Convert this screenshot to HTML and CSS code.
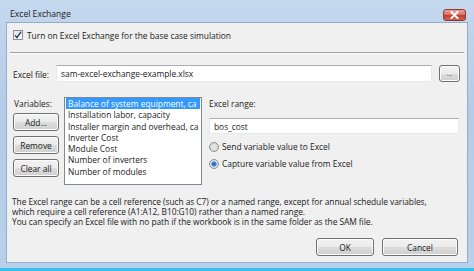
FILE: index.html
```html
<!DOCTYPE html>
<html>
<head>
<meta charset="utf-8">
<link rel="stylesheet" href="styles.css">
</head>
<body>
<div class="window">
  <div class="titlebar">
    <span class="title">Excel Exchange</span>
    <span class="close"><svg width="9" height="8" viewBox="0 0 9 8"><path d="M1.5 1 L7.5 7 M7.5 1 L1.5 7" stroke="#fff" stroke-width="2" stroke-linecap="square"/></svg></span>
  </div>
  <div class="client">
    <div class="check-row">
      <span class="checkbox"><svg width="8" height="8" viewBox="0 0 8 8"><path d="M1 4.2 L3 6.5 L7 0.8" fill="none" stroke="#2a3f74" stroke-width="1.4"/></svg></span>
      <span>Turn on Excel Exchange for the base case simulation</span>
    </div>
    <div class="sep"></div>
    <div class="file-row">
      <span class="file-label">Excel file:</span>
      <div class="textbox file-input">sam-excel-exchange-example.xlsx</div>
      <button class="btn browse">...</button>
    </div>
    <div class="vars">
      <div class="vars-left">
        <span class="vars-label">Variables:</span>
        <div class="side-btns">
          <button class="btn side-btn">Add...</button>
          <button class="btn side-btn">Remove</button>
          <button class="btn side-btn">Clear all</button>
        </div>
      </div>
      <div class="listbox">
        <div class="item selected">Balance of system equipment, ca</div>
        <div class="item">Installation labor, capacity</div>
        <div class="item">Installer margin and overhead, ca</div>
        <div class="item">Inverter Cost</div>
        <div class="item">Module Cost</div>
        <div class="item">Number of inverters</div>
        <div class="item">Number of modules</div>
      </div>
      <div class="range">
        <span class="range-label">Excel range:</span>
        <div class="textbox range-input">bos_cost</div>
        <div class="radio-row first"><span class="radio"></span><span>Send variable value to Excel</span></div>
        <div class="radio-row second"><span class="radio on"></span><span>Capture variable value from Excel</span></div>
      </div>
    </div>
    <div class="help">
      <div>The Excel range can be a cell reference (such as C7) or a named range, except for annual schedule variables,</div>
      <div>which require a cell reference (A1:A12, B10:G10) rather than a named range.</div>
      <div>You can specify an Excel file with no path if the workbook is in the same folder as the SAM file.</div>
    </div>
    <div class="footer">
      <button class="btn ok">OK</button>
      <button class="btn cancel">Cancel</button>
    </div>
  </div>
  <div class="frame-bottom"></div>
  <div class="desk-strip"></div>
</div>
</body>
</html>
```

FILE: styles.css
```css
* { box-sizing: border-box; }
body {
  margin: 0;
  font-family: "Open Sans", "Noto Sans", sans-serif;
  font-size: 8.4px;
  color: #1a1a1a;
  background: #ffffff;
}
.window {
  width: 474px;
  height: 271px;
  display: flex;
  flex-direction: column;
  background: linear-gradient(#c4d8ee, #b4cce7 40%, #b9d0ea);
  overflow: hidden;
}
.titlebar {
  height: 22px;
  display: flex;
  justify-content: space-between;
  align-items: flex-start;
  padding: 8px 8px 0 10px;
  flex: none;
}
.title {
  line-height: 12px;
  font-size: 8.6px;
  color: #1b1b1b;
}
.close {
  width: 23px;
  height: 12px;
  margin-top: 1px;
  border: 1px solid #8a3b33;
  border-radius: 3px;
  background: linear-gradient(#e8a497, #d5705f 50%, #c23c2a 52%, #d4614c);
  display: flex;
  align-items: center;
  justify-content: center;
}
.client {
  margin: 0 6px 0 6px;
  height: 241px;
  flex: none;
  border: 1px solid #93aecb;
  background: #f0f0f0;
  display: flex;
  flex-direction: column;
}
.frame-bottom { height: 5px; flex: none; }
.desk-strip {
  height: 3px;
  flex: none;
  background: #35c3ea;
}
.check-row {
  margin-top: 6px;
  padding-left: 6px;
  height: 12px;
  display: flex;
  align-items: center;
  gap: 4px;
}
.checkbox {
  width: 10px;
  height: 10px;
  border: 1px solid #8f8f8f;
  background: linear-gradient(#e6e6e6, #ffffff);
  display: flex;
  align-items: center;
  justify-content: center;
}
.sep {
  margin: 11px 3px 0 3px;
  height: 2px;
  border-top: 1px solid #a0a0a0;
  border-bottom: 1px solid #ffffff;
}
.file-row {
  margin-top: 11px;
  padding-left: 6px;
  padding-right: 7px;
  display: flex;
  align-items: center;
  height: 17px;
}
.file-label {
  width: 43px;
  flex: none;
  margin-top: 2px;
}
.textbox {
  background: #ffffff;
  border: 1px solid #e3e9ef;
  border-top-color: #abadb3;
  display: flex;
  align-items: center;
  padding-left: 4px;
}
.file-input {
  width: 376px;
  height: 17px;
}
.btn {
  font-family: inherit;
  font-size: inherit;
  color: #1a1a1a;
  border: 1px solid #707070;
  border-radius: 3px;
  background: linear-gradient(#f2f2f2, #ebebeb 50%, #dddddd 51%, #cfcfcf);
  box-shadow: inset 0 0 0 1px #fcfcfc;
  padding: 0;
  display: flex;
  align-items: center;
  justify-content: center;
}
.browse {
  margin-left: 7px;
  width: 21px;
  height: 17px;
  font-size: 7px;
  color: #444;
}
.vars {
  margin-top: 15px;
  padding-left: 6px;
  display: flex;
  height: 88px;
}
.vars-left {
  width: 46px;
  display: flex;
  flex-direction: column;
}
.vars-label {
  margin-top: 1px;
  line-height: 12px;
  padding-left: 1px;
}
.side-btns {
  margin-top: 3px;
  display: flex;
  flex-direction: column;
  gap: 5px;
}
.side-btn {
  height: 18px;
  width: 46px;
}
.listbox {
  margin-left: 5px;
  width: 138px;
  height: 88px;
  background: #ffffff;
  border: 1px solid #828790;
  padding: 0 1px;
  overflow: hidden;
}
.item {
  height: 11.3px;
  line-height: 11.3px;
  padding-left: 2px;
  white-space: nowrap;
  overflow: hidden;
}
.item.selected {
  background: #3399ff;
  color: #ffffff;
}
.range {
  margin-left: 7px;
  width: 250px;
  display: flex;
  flex-direction: column;
}
.range-label {
  margin-top: 1px;
  line-height: 12px;
}
.range-input {
  margin-top: 8px;
  height: 16px;
}
.radio-row {
  display: flex;
  align-items: center;
  gap: 3px;
  height: 12px;
  line-height: 12px;
}
.radio-row.first { margin-top: 7px; }
.radio-row.second { margin-top: 5px; }
.radio {
  width: 10px;
  height: 10px;
  border-radius: 50%;
  border: 1px solid #8e8f8f;
  background: radial-gradient(circle, #e9e9e9, #d2d2d2);
  display: inline-block;
  flex: none;
}
.radio.on {
  background: radial-gradient(circle, #1f5ea8 0, #4b93d8 2.4px, #dfe9f3 3px, #d2d2d2 5px);
}
.help {
  margin-top: 12px;
  padding-left: 5px;
  line-height: 9.8px;
  white-space: nowrap;
  letter-spacing: -0.05px;
}
.footer {
  margin-top: 12px;
  padding-right: 9px;
  display: flex;
  justify-content: flex-end;
  gap: 8px;
}
.ok { width: 58px; height: 18px; }
.cancel { width: 76px; height: 18px; }
```
